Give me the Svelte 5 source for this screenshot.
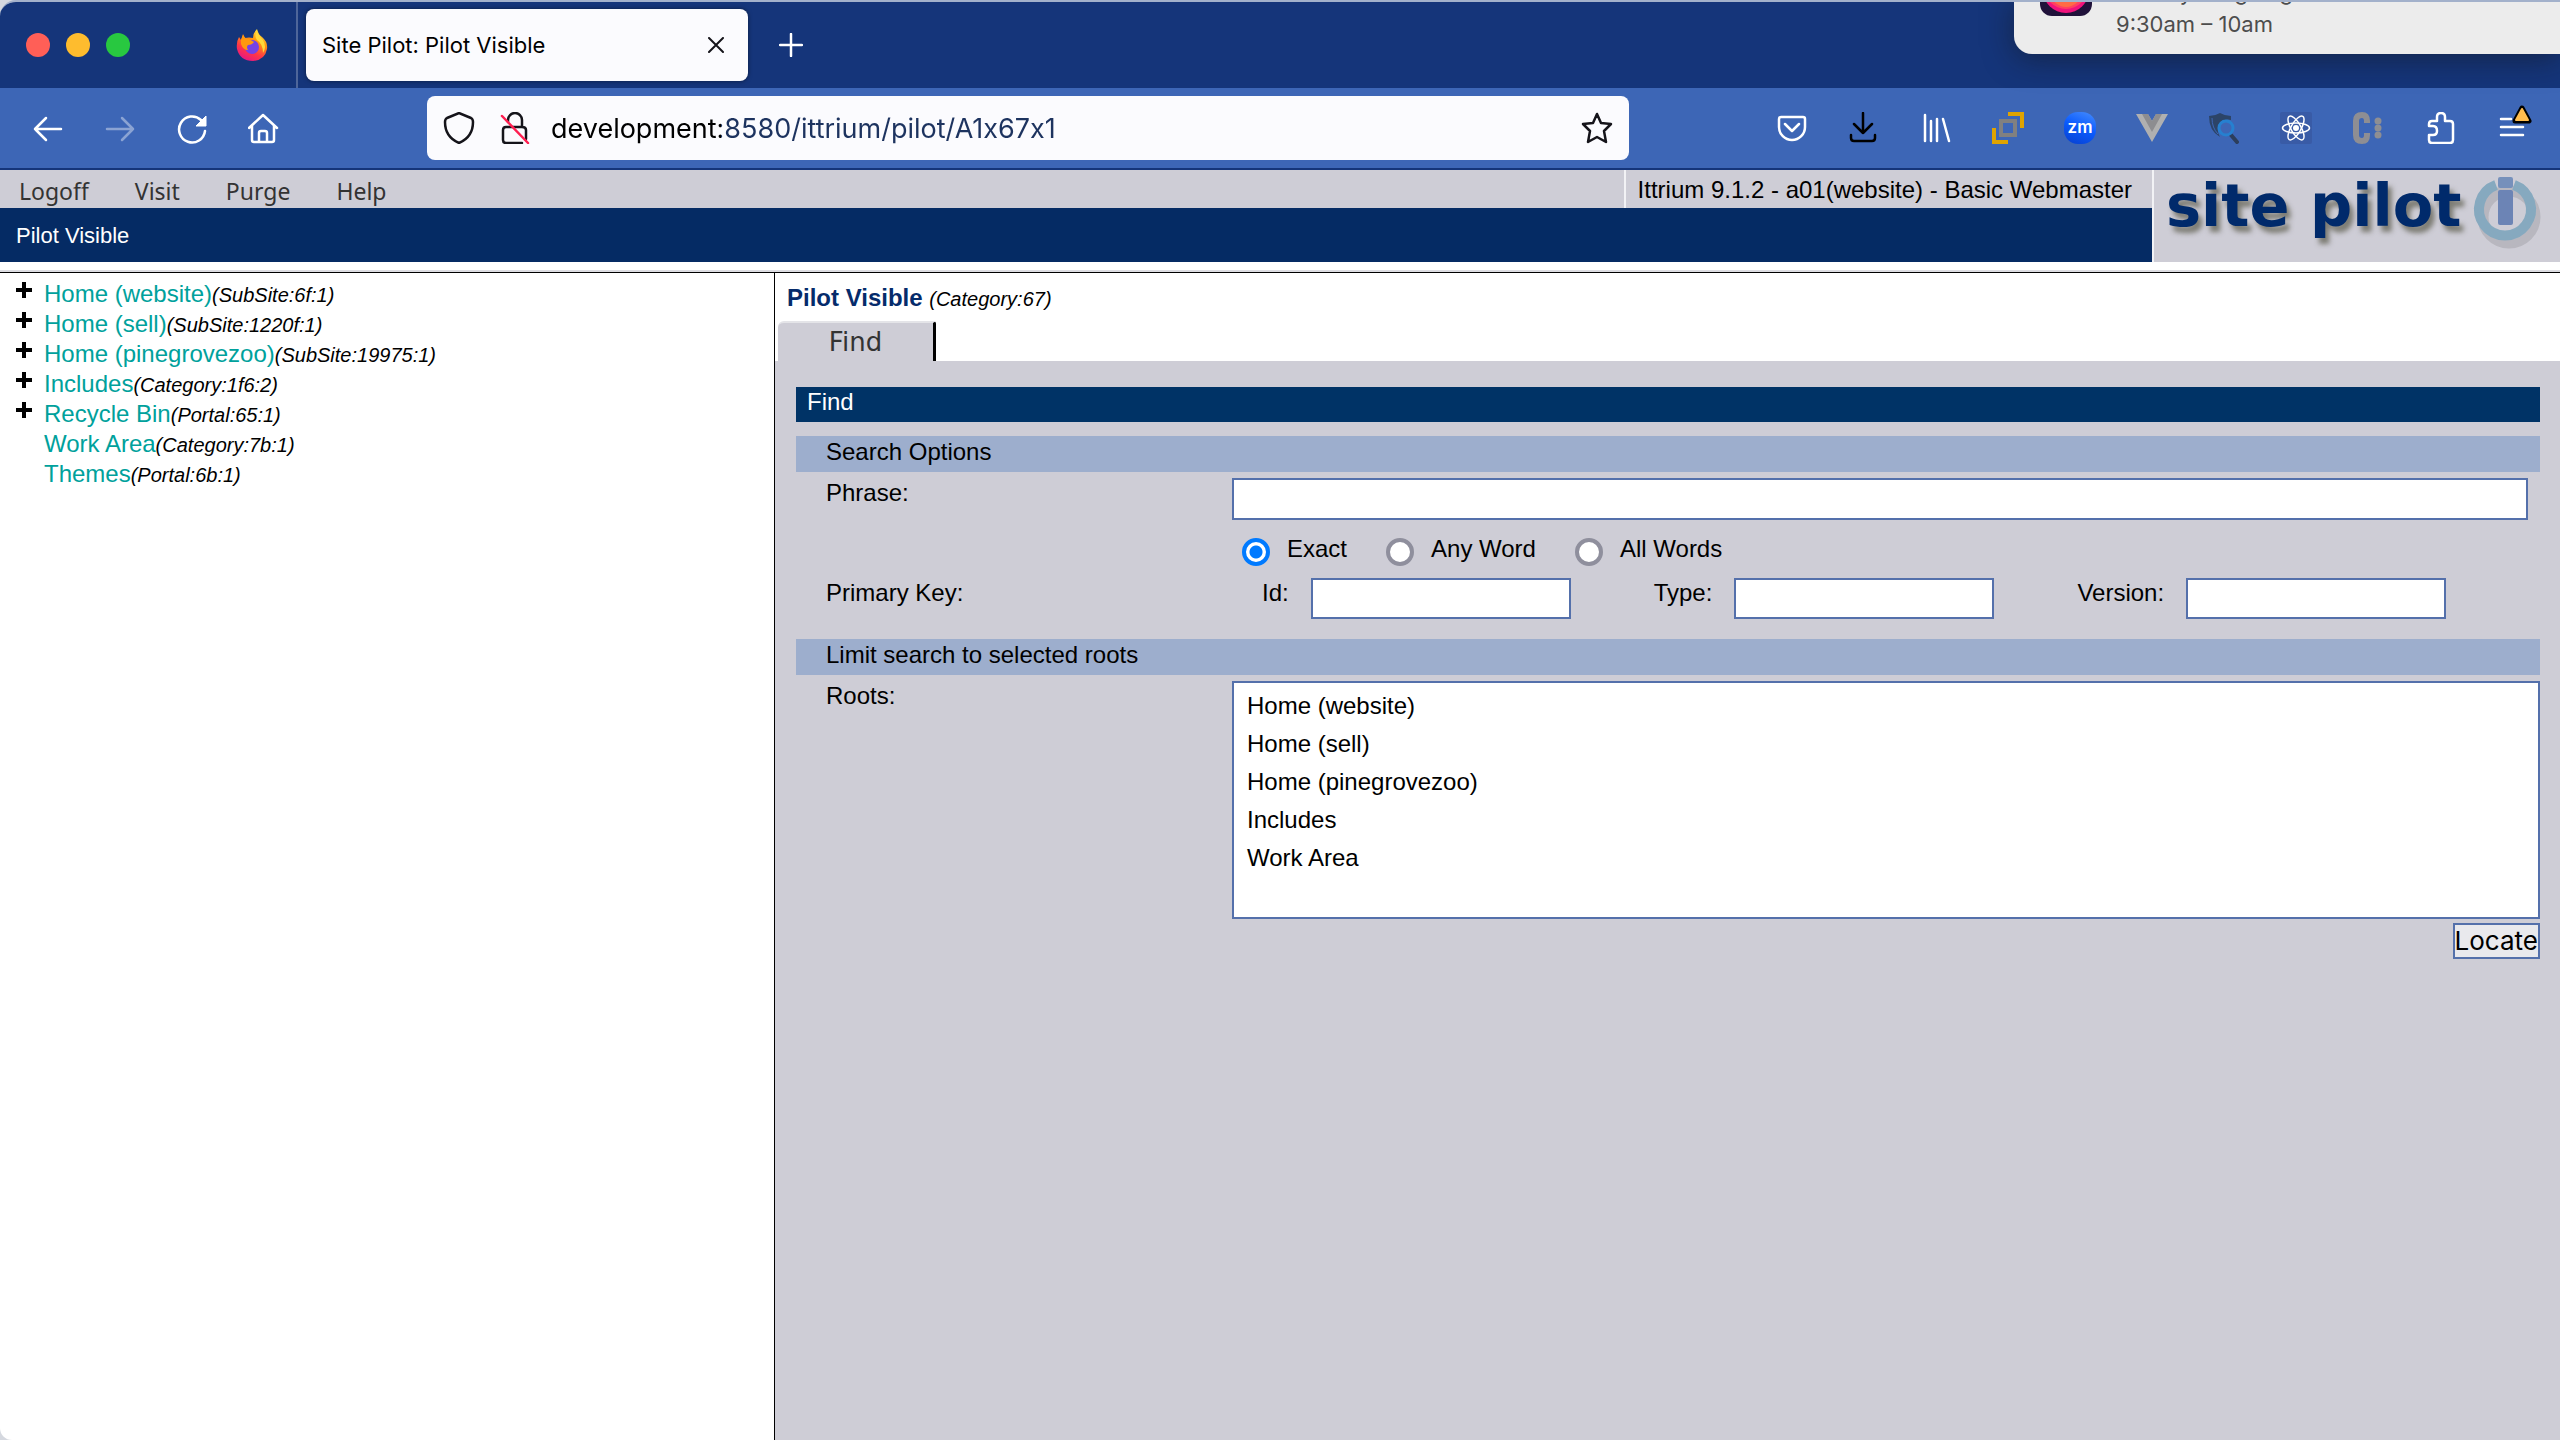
<script>
	let phrase = '';
	let match = 'exact';
	let roots = [];
	let url = 'development:8580/ittrium/pilot/A1x67x1';

	const menu = ['Logoff', 'Visit', 'Purge', 'Help'];

	const tree = [
		{ name: 'Home (website)', key: '(SubSite:6f:1)', open: true },
		{ name: 'Home (sell)', key: '(SubSite:1220f:1)', open: true },
		{ name: 'Home (pinegrovezoo)', key: '(SubSite:19975:1)', open: true },
		{ name: 'Includes', key: '(Category:1f6:2)', open: true },
		{ name: 'Recycle Bin', key: '(Portal:65:1)', open: true },
		{ name: 'Work Area', key: '(Category:7b:1)', open: false },
		{ name: 'Themes', key: '(Portal:6b:1)', open: false }
	];

	const matches = [
		{ value: 'exact', label: 'Exact' },
		{ value: 'any', label: 'Any Word' },
		{ value: 'all', label: 'All Words' }
	];

	const keys = [
		{ id: 'pkId', label: 'Id:' },
		{ id: 'pkType', label: 'Type:' },
		{ id: 'pkVersion', label: 'Version:' }
	];

	const rootOptions = ['Home (website)', 'Home (sell)', 'Home (pinegrovezoo)', 'Includes', 'Work Area'];
</script>

<div class="window">
	<header class="tabStrip">
		<div class="lights">
			<button class="light red" aria-label="Close window"></button>
			<button class="light yellow" aria-label="Minimize window"></button>
			<button class="light green" aria-label="Zoom window"></button>
		</div>
		<button class="pinned" aria-label="Firefox">
			<svg class="icon" viewBox="0 0 32 32">
				<defs>
					<linearGradient id="flame" x1="0.8" y1="0" x2="0.3" y2="1">
						<stop offset="0" stop-color="#fff44f" />
						<stop offset="0.35" stop-color="#ff980e" />
						<stop offset="0.7" stop-color="#ff3647" />
						<stop offset="1" stop-color="#e31587" />
					</linearGradient>
				</defs>
				<path fill="url(#flame)" d="M3 8L5 11L7 5L9 9Q13 8 17 9Q17 4 21 0Q22 5 26 8Q32 13 31 20Q29 31 17 32Q4 32 1 20Q0 13 3 8z" />
				<circle cx="16" cy="18" r="7" fill="#7542e5" />
				<path fill="#ff980e" d="M5 11L7 6Q9 10 13 10L18 13Q16 16 12 16Q10 18 12 21Q7 21 5 15z" />
				<path fill="#ffd93a" d="M21 1Q22 6 27 11Q31 18 27 24Q27 15 21 11Q18 7 21 1z" />
			</svg>
		</button>
		<div class="tab">
			<span>Site Pilot: Pilot Visible</span>
			<button class="close" aria-label="Close tab">
				<svg viewBox="0 0 16 16"><path d="M1 1L15 15M15 1L1 15" fill="none" stroke="#15141a" stroke-width="2" stroke-linecap="round" /></svg>
			</button>
		</div>
		<button class="newTab" aria-label="New tab">
			<svg viewBox="0 0 24 24"><path d="M12 1V23M1 12H23" fill="none" stroke="#fff" stroke-width="2.5" stroke-linecap="round" /></svg>
		</button>
	</header>

	<nav class="toolbar">
		<button class="icon" aria-label="Back">
			<svg viewBox="0 0 32 32"><path class="line" d="M29 17H3M14 6L3 17L14 28" /></svg>
		</button>
		<button class="icon faded" aria-label="Forward">
			<svg viewBox="0 0 32 32"><path class="line" d="M3 17H29M18 6L29 17L18 28" /></svg>
		</button>
		<button class="icon" aria-label="Reload">
			<svg viewBox="0 0 32 32">
				<path class="line" d="M25 8A13 13 0 1 0 29 19" />
				<path d="M30 4V14H20z" fill="#fff" stroke="#fff" stroke-linejoin="round" />
			</svg>
		</button>
		<button class="icon" aria-label="Home">
			<svg viewBox="0 0 32 32"><path class="line" d="M1 16L15 3L29 16M4 14V28Q4 30 6 30H24Q26 30 26 28V14M11 30V21Q11 19 13 19H17Q19 19 19 21V30" /></svg>
		</button>
		<div class="urlBar">
			<svg class="icon" viewBox="0 0 32 32"><path class="line dark" d="M16 1L28 6Q30 7 30 10Q30 25 16 31Q2 25 2 10Q2 7 4 6z" /></svg>
			<svg class="icon lock" viewBox="0 0 32 32">
				<path class="line dark" d="M9 10V8A7 7 0 0 1 23 8V15M7 15H23Q27 15 27 18V27M23 31H7Q4 31 4 28V18Q4 15 7 15" />
				<path class="line slash" d="M3 4L29 31" />
			</svg>
			<input class="url" type="text" aria-label="Address" bind:value={url} />
			<button class="icon" aria-label="Bookmark">
				<svg viewBox="0 0 32 32"><path class="line dark" d="M16 2L20 11L30 12L23 19L25 30L16 25L7 30L9 19L2 12L12 11z" /></svg>
			</button>
		</div>
		<div class="addons">
			<button class="icon" aria-label="Pocket">
				<svg viewBox="0 0 32 32"><path class="line" d="M5 5H27Q29 5 29 7V15A13 13 0 0 1 3 15V7Q3 5 5 5zM9 12L16 19L23 12" /></svg>
			</button>
			<button class="icon" aria-label="Downloads">
				<svg viewBox="0 0 32 32"><path class="line black" d="M15 1V21M6 12L15 21L24 12M3 23V26Q3 29 6 29H24Q27 29 27 26V23" /></svg>
			</button>
			<button class="icon" aria-label="Library">
				<svg viewBox="0 0 32 32"><path class="line" d="M5 3V29M11 9V29M17 7V29M23 7L29 29" /></svg>
			</button>
			<button class="icon" aria-label="Containers">
				<svg viewBox="0 0 32 32">
					<path d="M16 2H30V16M2 16V30H16" fill="none" stroke="#e0a300" stroke-width="4" />
					<rect x="9" y="9" width="14" height="14" fill="none" stroke="#808080" stroke-width="4" />
				</svg>
			</button>
			<button class="icon" aria-label="Zoom">
				<svg viewBox="0 0 32 32">
					<defs>
						<linearGradient id="zm" x1="0.8" y1="0" x2="0.4" y2="1">
							<stop offset="0" stop-color="#4087fc" />
							<stop offset="0.5" stop-color="#0b5cff" />
							<stop offset="1" stop-color="#0845d8" />
						</linearGradient>
					</defs>
					<rect width="32" height="32" rx="14" fill="url(#zm)" />
					<text x="16" y="21" text-anchor="middle" font-family="Inter, sans-serif" font-size="17" font-weight="600" fill="#fff">zm</text>
				</svg>
			</button>
			<button class="icon" aria-label="Vue devtools">
				<svg viewBox="0 0 32 32">
					<path d="M0 2H12L16 9L20 2H32L16 30z" fill="#b0b0b0" />
					<path d="M6 2H12L16 9L20 2H26L16 20z" fill="#8d8d90" />
				</svg>
			</button>
			<button class="icon" aria-label="Inspector">
				<svg viewBox="0 0 32 32">
					<path d="M1 4Q7 4 12 1Q17 4 23 4V8Q14 6 10 14Q9 20 12 25Q1 19 1 4z" fill="#2c4468" />
					<path d="M4 6Q4 16 10 22" fill="none" stroke="#3d66b6" />
					<path d="M23 23L29 30" stroke="#2c3e5c" stroke-width="4" stroke-linecap="round" />
					<circle cx="18" cy="16" r="7" fill="#3d66b6" stroke="#2680d0" stroke-width="3" />
				</svg>
			</button>
			<button class="icon" aria-label="React devtools">
				<svg viewBox="0 0 32 32">
					<rect width="32" height="32" rx="2" fill="#395ba6" />
					<g fill="none" stroke="#fff" stroke-width="1.5">
						<ellipse cx="16" cy="16" rx="13.5" ry="5" />
						<ellipse cx="16" cy="16" rx="13.5" ry="5" transform="rotate(60 16 16)" />
						<ellipse cx="16" cy="16" rx="13.5" ry="5" transform="rotate(120 16 16)" />
					</g>
					<circle cx="16" cy="16" r="3" fill="#fff" />
				</svg>
			</button>
			<button class="icon" aria-label="Colons">
				<svg viewBox="0 0 32 32">
					<path d="M15 11V9Q15 3 10 3Q4 3 4 9V23Q4 29 10 29Q15 29 15 23V21" fill="none" stroke="#8e8e93" stroke-width="6" />
					<circle cx="26" cy="9" r="3.5" fill="#8e8e93" />
					<circle cx="26" cy="16" r="3.5" fill="#8e8e93" />
					<circle cx="26" cy="23" r="3.5" fill="#8e8e93" />
				</svg>
			</button>
			<button class="icon" aria-label="Extensions">
				<svg viewBox="0 0 32 32"><path class="line" d="M5 14V12Q5 9 8 9H13V5Q13 1 17 1Q21 1 21 5V9H26Q29 9 29 12V28Q29 31 26 31H8Q5 31 5 28V23H9Q13 23 13 19Q13 14 9 14z" /></svg>
			</button>
			<button class="icon appMenu" aria-label="Menu">
				<svg viewBox="0 0 32 32"><path class="line" d="M5 7H15M5 15H27M5 23H27" /></svg>
				<svg class="warning" viewBox="0 0 20 20"><path d="M10 3L17 16H3z" fill="#000" stroke="#000" stroke-width="5" stroke-linejoin="round" /><path d="M10 4L16 15H4z" fill="#ffbd4f" stroke="#ffbd4f" stroke-width="2" stroke-linejoin="round" /></svg>
			</button>
		</div>
	</nav>

	<div class="banner">
		<div class="bannerLeft">
			<div class="menuRow">
				<ul class="menu">
					{#each menu as item}
						<li><a href="#{item}">{item}</a></li>
					{/each}
				</ul>
				<span class="status">Ittrium 9.1.2 - a01(website) - Basic Webmaster</span>
			</div>
			<div class="crumb">Pilot Visible</div>
		</div>
		<div class="logo">
			<span>site pilot</span>
			<svg viewBox="0 0 72 84">
				<circle cx="39" cy="47" r="26" fill="none" stroke="#77777a" stroke-opacity="0.25" stroke-width="11" />
				<path d="M44 15A26 26 0 1 1 26 15" fill="none" stroke="#86a9bf" stroke-width="10" />
				<rect x="28" y="7" width="15" height="11" rx="2" fill="#7690bb" />
				<rect x="28" y="20" width="15" height="35" rx="2" fill="#6c84b5" />
			</svg>
		</div>
	</div>

	<div class="frames">
		<aside class="tree">
			<ul>
				{#each tree as node}
					<li>
						<span class="toggle">
							{#if node.open}
								<button aria-label="Expand {node.name}">
									<svg viewBox="0 0 16 16"><path d="M8 0V16M0 8H16" stroke="#000" stroke-width="4" /></svg>
								</button>
							{/if}
						</span>
						<a href="#node">{node.name}</a><i>{node.key}</i>
					</li>
				{/each}
			</ul>
		</aside>

		<main>
			<h1>Pilot Visible <i>(Category:67)</i></h1>
			<button class="paneTab">Find</button>
			<form on:submit|preventDefault>
				<h2 class="title">Find</h2>
				<h3 class="bar">Search Options</h3>
				<div class="row">
					<label class="name" for="phrase">Phrase:</label>
					<div class="fields">
						<input id="phrase" class="box phrase" type="text" bind:value={phrase} />
						<div class="radios">
							{#each matches as m}
								<label><input type="radio" name="match" value={m.value} bind:group={match} />{m.label}</label>
							{/each}
						</div>
					</div>
				</div>
				<div class="row keyRow">
					<span class="name">Primary Key:</span>
					<div class="keys">
						{#each keys as key}
							<div class="key">
								<label for={key.id}>{key.label}</label>
								<input id={key.id} class="box" type="text" />
							</div>
						{/each}
					</div>
				</div>
				<h3 class="bar">Limit search to selected roots</h3>
				<div class="row">
					<label class="name" for="roots">Roots:</label>
					<div class="fields">
						<select id="roots" class="box" multiple size="6" bind:value={roots}>
							{#each rootOptions as root}
								<option>{root}</option>
							{/each}
						</select>
					</div>
				</div>
				<button class="locate">Locate</button>
			</form>
		</main>
	</div>

	<div class="notice">
		<svg viewBox="0 0 52 52">
			<rect width="52" height="52" rx="12" fill="#20123a" />
			<circle cx="26" cy="26" r="23" fill="#f0127c" />
			<circle cx="26" cy="23" r="22" fill="#ff4060" />
			<path d="M7 30Q26 56 45 30z" fill="#ff6b45" />
		</svg>
		<div class="noticeText">
			<span>Weekly on-going class</span>
			<span>9:30am – 10am</span>
		</div>
	</div>
</div>

<style>
	:global(body) {
		background: #d5d8df;
	}
	.window {
		position: relative;
		display: flex;
		flex-direction: column;
		min-height: 100vh;
		box-sizing: border-box;
		overflow: hidden;
		border-top: 2px solid #a3b1cb;
		border-radius: 16px 0 0 12px;
		background: #fff;
		color: #000;
		font: 24px/26px "Liberation Sans", Arial, sans-serif;
	}
	button {
		padding: 0;
		border: 0;
		background: none;
		font: inherit;
		color: inherit;
	}
	svg {
		display: block;
	}
	ul {
		margin: 0;
		padding: 0;
		list-style: none;
	}
	a {
		text-decoration: none;
	}

	/* browser chrome */
	.tabStrip {
		display: flex;
		align-items: center;
		height: 86px;
		background: #15357a;
		font-family: Inter, sans-serif;
	}
	.lights {
		display: flex;
		gap: 16px;
		padding-left: 26px;
	}
	.light {
		width: 24px;
		height: 24px;
		border-radius: 50%;
	}
	.red { background: #ff5f57; }
	.yellow { background: #febc2e; }
	.green { background: #28c840; }
	.icon {
		flex: none;
		width: 32px;
		height: 32px;
	}
	.pinned {
		margin-left: 106px;
		padding: 27px 28px 27px 0;
		border-right: 2px solid #4e669a;
	}
	.tab {
		display: flex;
		align-items: center;
		justify-content: space-between;
		box-sizing: border-box;
		width: 442px;
		height: 72px;
		margin-left: 8px;
		padding: 0 24px 0 16px;
		border-radius: 8px;
		background: #fbfbfe;
		box-shadow: 0 0 4px rgba(0, 0, 0, 0.5);
		font-size: 22px;
		line-height: 28px;
	}
	.close {
		width: 16px;
		height: 16px;
	}
	.newTab {
		width: 24px;
		height: 24px;
		margin-left: 31px;
	}
	.toolbar {
		display: flex;
		align-items: center;
		gap: 40px;
		height: 80px;
		padding: 0 32px;
		border-bottom: 2px solid #15357a;
		background: #3d66b6;
	}
	.line {
		fill: none;
		stroke: #fff;
		stroke-width: 2.5;
		stroke-linecap: round;
		stroke-linejoin: round;
	}
	.dark { stroke: #15141a; }
	.black { stroke: #000; }
	.slash { stroke: #ff1f50; }
	.faded { opacity: 0.4; }
	.urlBar {
		display: flex;
		flex: 1;
		align-items: center;
		box-sizing: border-box;
		height: 64px;
		margin: 0 107px;
		padding: 0 16px;
		border-radius: 8px;
		background: #fbfbfe;
	}
	.lock {
		margin: 0 20px 0 24px;
	}
	.url {
		flex: 1;
		min-width: 0;
		padding: 2px 0 0;
		border: 0;
		background: linear-gradient(90deg, #000 170px, #1d335f 170px);
		-webkit-background-clip: text;
		background-clip: text;
		color: transparent;
		font: 27px/40px Inter, sans-serif;
		font-feature-settings: "calt" 0;
	}
	.addons {
		display: flex;
		gap: 40px;
	}
	.appMenu {
		position: relative;
	}
	.warning {
		position: absolute;
		top: -7px;
		right: -4px;
		width: 20px;
		height: 20px;
	}

	/* page banner */
	.banner {
		display: flex;
		height: 92px;
		background: #cecdd6;
	}
	.bannerLeft {
		flex: 1;
	}
	.menuRow {
		display: flex;
		justify-content: space-between;
		height: 38px;
	}
	.menu {
		display: flex;
		gap: 46px;
		padding: 5px 0 0 19px;
		font-family: "Noto Sans", sans-serif;
		font-size: 23px;
		line-height: 32px;
	}
	.menu a {
		color: #333;
	}
	.status {
		padding: 7px 20px 0 12px;
		border-left: 2px solid #f2f2f5;
		line-height: 26px;
	}
	.crumb {
		height: 54px;
		padding-left: 16px;
		background: #052b64;
		color: #fff;
		font-size: 22px;
		line-height: 55px;
	}
	.logo {
		display: flex;
		box-sizing: border-box;
		width: 408px;
		padding-left: 12px;
		border-left: 2px solid #f2f2f5;
		color: #002a6b;
		font: bold 59px/72px "DejaVu Sans", Verdana, sans-serif;
		text-shadow: 4px 6px 5px rgba(70, 70, 50, 0.6);
		white-space: nowrap;
	}
	.logo svg {
		width: 72px;
		height: 84px;
		margin-left: 8px;
	}

	/* frames */
	.frames {
		display: flex;
		flex: 1;
		margin-top: 8px;
		border-top: 2px solid #dddde2;
	}
	.tree {
		box-sizing: border-box;
		width: 775px;
		padding-top: 6px;
		border-top: 1px solid #000;
		border-right: 1px solid #000;
	}
	.tree li {
		display: flex;
		align-items: baseline;
		height: 30px;
		line-height: 30px;
	}
	.toggle {
		align-self: flex-start;
		width: 28px;
		padding: 3px 0 0 16px;
	}
	.toggle button {
		display: block;
		width: 16px;
		height: 16px;
	}
	.tree a {
		color: #00a19c;
	}
	i {
		color: #000;
		font-size: 20px;
		font-weight: normal;
	}
	main {
		display: flex;
		flex: 1;
		flex-direction: column;
		align-items: flex-start;
		border-top: 1px solid #000;
	}
	h1, h2, h3 {
		margin: 0;
		font-size: 24px;
		font-weight: normal;
	}
	h1 {
		padding: 12px 0 9px 12px;
		color: #052b6b;
		font-weight: bold;
	}
	.paneTab {
		width: 158px;
		height: 40px;
		margin-left: 3px;
		border-top: 2px solid #e4e4e8;
		border-right: 3px solid #000;
		border-radius: 6px 3px 0 0;
		background: #cecdd6;
		color: #333;
		font: 26px/36px "DejaVu Sans", Verdana, sans-serif;
	}
	form {
		display: flex;
		flex: 1;
		flex-direction: column;
		align-self: stretch;
		padding: 26px 20px 0 21px;
		background: #cecdd6;
	}
	.title {
		height: 33px;
		margin-bottom: 14px;
		padding: 2px 11px 0;
		background: #003366;
		color: #fff;
	}
	.bar {
		height: 33px;
		padding: 3px 30px 0;
		background: #9daecd;
	}
	.row {
		display: flex;
		padding-top: 6px;
	}
	.name {
		flex: none;
		width: 406px;
		padding: 2px 0 0 30px;
	}
	.fields {
		flex: 1;
	}
	.box {
		box-sizing: border-box;
		margin: 0;
		border: 2px solid #5470ab;
		border-radius: 0;
		background: #fff;
		font: inherit;
		outline: none;
	}
	.phrase {
		display: block;
		width: calc(100% - 12px);
		height: 42px;
	}
	.radios {
		display: flex;
		gap: 39px;
		height: 46px;
		padding: 12px 0 0 10px;
		line-height: 34px;
	}
	.radios label {
		display: flex;
		align-items: flex-start;
		gap: 17px;
	}
	.radios input {
		appearance: none;
		box-sizing: border-box;
		width: 28px;
		height: 28px;
		margin: 6px 0 0;
		border: 4px solid #8f8f9d;
		border-radius: 50%;
		background: #fff;
	}
	.radios input:checked {
		border-color: #007aff;
		background: radial-gradient(circle, #007aff 6px, #fff 7px);
	}
	.keyRow {
		padding: 0 0 20px;
	}
	.keys {
		display: flex;
		gap: 83px;
		padding-left: 30px;
	}
	.key {
		display: flex;
		gap: 22px;
	}
	.key label {
		padding-top: 2px;
	}
	.key .box {
		width: 260px;
		height: 41px;
	}
	select {
		display: block;
		width: 100%;
		height: 238px;
		padding: 4px 0;
		overflow: hidden;
	}
	option {
		min-height: 0;
		padding: 5px 13px;
	}
	.locate {
		align-self: flex-end;
		height: 36px;
		margin-top: 4px;
		border: 2px solid #5470ab;
		background: #e9e9ed;
		font: 26px/32px Inter, sans-serif;
	}

	/* calendar notification over the window's corner */
	.notice {
		position: absolute;
		top: -2px;
		right: 0;
		display: flex;
		align-items: flex-end;
		gap: 24px;
		box-sizing: border-box;
		width: 546px;
		height: 54px;
		padding: 0 26px 38px;
		border-radius: 0 0 0 18px;
		background: #ececec;
		box-shadow: 0 4px 30px rgba(20, 20, 20, 0.5);
		color: #4d4d4d;
		font: 22px/32px Inter, sans-serif;
	}
	.notice svg {
		flex: none;
		width: 52px;
		height: 52px;
	}
	.noticeText {
		display: flex;
		flex-direction: column;
		margin-bottom: -24px;
	}
</style>
